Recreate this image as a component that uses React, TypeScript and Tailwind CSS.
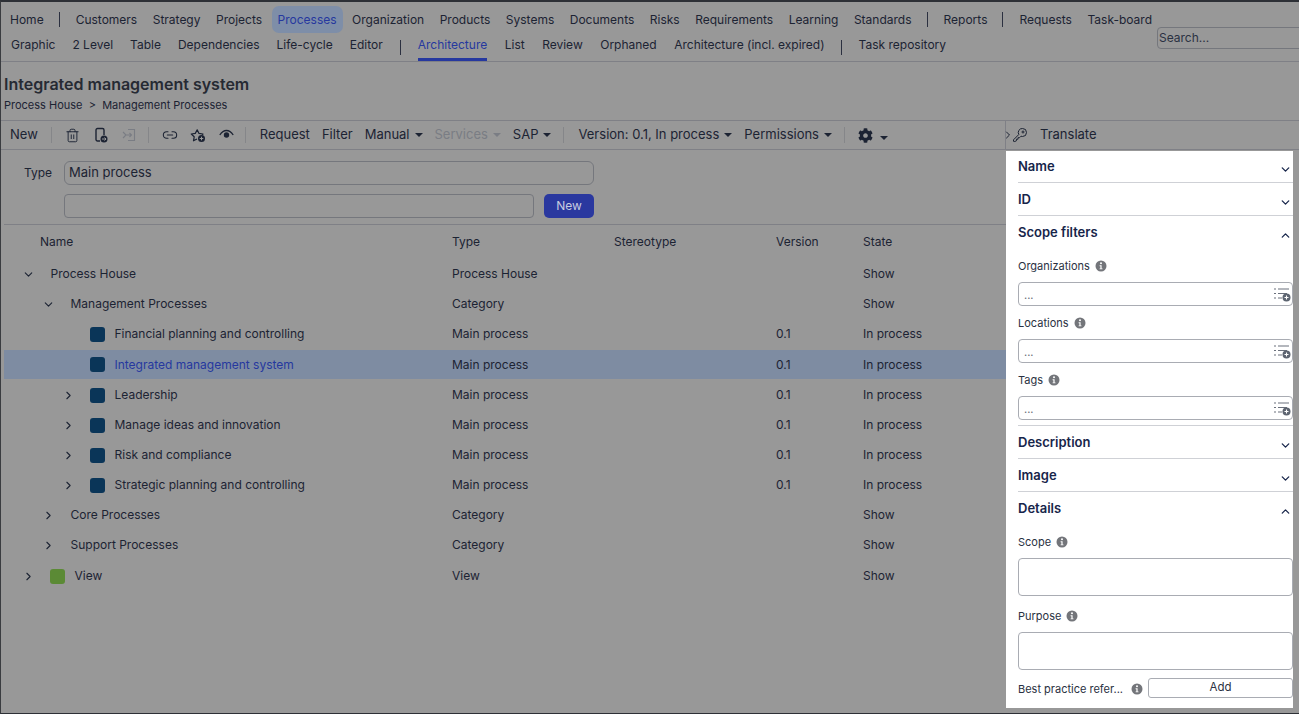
import { ChevronDown, ChevronRight, ChevronUp, Link2, Trash2 } from "lucide-react";
import { FaCog } from "react-icons/fa";

const topNav = [
  ["Home"],
  ["Customers", "Strategy", "Projects", "Processes", "Organization", "Products", "Systems", "Documents", "Risks", "Requirements", "Learning", "Standards"],
  ["Reports"],
  ["Requests", "Task-board"],
];
const subNav = [
  ["Graphic", "2 Level", "Table", "Dependencies", "Life-cycle", "Editor"],
  ["Architecture", "List", "Review", "Orphaned", "Architecture (incl. expired)"],
  ["Task repository"],
];

const indents = ["pl-[14px]", "pl-[34px]", "pl-[54px]"];

type Row = {
  name: string;
  type: string;
  version?: string;
  state: string;
  level: number;
  arrow?: "open" | "closed";
  icon?: "blue" | "green";
  selected?: boolean;
  spaced?: boolean;
};

const rows: Row[] = [
  { name: "Process House", type: "Process House", state: "Show", level: 0, arrow: "open" },
  { name: "Management Processes", type: "Category", state: "Show", level: 1, arrow: "open" },
  { name: "Financial planning and controlling", type: "Main process", version: "0.1", state: "In process", level: 2, icon: "blue" },
  { name: "Integrated management system", type: "Main process", version: "0.1", state: "In process", level: 2, icon: "blue", selected: true },
  { name: "Leadership", type: "Main process", version: "0.1", state: "In process", level: 2, arrow: "closed", icon: "blue" },
  { name: "Manage ideas and innovation", type: "Main process", version: "0.1", state: "In process", level: 2, arrow: "closed", icon: "blue" },
  { name: "Risk and compliance", type: "Main process", version: "0.1", state: "In process", level: 2, arrow: "closed", icon: "blue" },
  { name: "Strategic planning and controlling", type: "Main process", version: "0.1", state: "In process", level: 2, arrow: "closed", icon: "blue" },
  { name: "Core Processes", type: "Category", state: "Show", level: 1, arrow: "closed" },
  { name: "Support Processes", type: "Category", state: "Show", level: 1, arrow: "closed" },
  { name: "View", type: "View", state: "Show", level: 0, arrow: "closed", icon: "green", spaced: true },
];

function Sep({ className }: { className: string }) {
  return <span className={`h-[15px] w-px shrink-0 bg-[#2b3040] ${className}`} />;
}

function Caret({ muted }: { muted?: boolean }) {
  return (
    <span
      className={`ml-[5px] inline-block h-0 w-0 border-x-[4px] border-t-[4px] border-x-transparent ${
        muted ? "border-t-[#7a7d84]" : "border-t-[#1c2333]"
      }`}
    />
  );
}

function InfoDot() {
  return (
    <svg width="12" height="12" viewBox="0 0 12 12" className="shrink-0">
      <circle cx="6" cy="6" r="5.500" fill="#73757a" />
      <circle cx="6" cy="3.300" r="1" fill="#fff" />
      <path d="M4.600 5.300H6.600V8.400H7.500V9.300H4.600V8.400H5.400V6.200H4.600Z" fill="#fff" />
    </svg>
  );
}

function ListAddIcon() {
  return (
    <svg width="18" height="15" viewBox="0 0 18 15" className="absolute right-[1px] top-[4px]" fill="none">
      <path d="M1 2h2M5 2h11M1 6.500h2M5 6.500h9M1 11h2M5 11h4" stroke="#6a707c" strokeWidth="1.100" />
      <circle cx="13.500" cy="10.500" r="4" fill="#5d6470" />
      <path d="M11.500 10.500h4M13.500 8.500v4" stroke="#fff" strokeWidth="1.100" />
    </svg>
  );
}

function Section({ title, open, className = "h-[32px] pt-[8px]" }: { title: string; open?: boolean; className?: string }) {
  return (
    <div className={`flex items-start justify-between pr-[1.5px] ${className}`}>
      <span className="text-[13px] font-semibold leading-[17px] text-[#17254a]">{title}</span>
      {open ? (
        <ChevronUp size={13} strokeWidth={2.4} className="mt-[5px] text-[#17254a]" />
      ) : (
        <ChevronDown size={13} strokeWidth={2.4} className="mt-[5px] text-[#17254a]" />
      )}
    </div>
  );
}

function Label({ text, className = "" }: { text: string; className?: string }) {
  return (
    <div className={`flex items-center gap-[5px] text-[11px] leading-[14px] text-[#2a3142] ${className}`}>
      <span>{text}</span>
      <InfoDot />
    </div>
  );
}

function DotsInput({ className = "" }: { className?: string }) {
  return (
    <div className={`relative h-[24px] rounded-[4px] border border-[#a9acb3] pl-[5px] text-[11px] leading-[24px] text-[#666b75] ${className}`}>
      ...
      <ListAddIcon />
    </div>
  );
}

export default function App() {
  return (
    <div className="flex h-[714px] w-[1299px] flex-col overflow-hidden border-b border-l border-t-2 border-b-[#2d3036] border-l-[#3a3c40] border-t-[#2d3036] bg-[#989898] font-['Inter',sans-serif] text-[#1c2333]">
      {/* top navigation */}
      <nav className="flex h-[60px] shrink-0 border-b border-[#7f8086]">
        <div className="w-[1156px] shrink-0 pl-[3px]">
          <div className="mt-[4px] flex h-[27px] items-center whitespace-nowrap text-[12px]">
            {topNav.map((group, g) => (
              <div key={g} className="flex items-center">
                {g > 0 && <Sep className="ml-[5.5px] mr-[10px]" />}
                {group.map((item) => (
                  <span
                    key={item}
                    className={`mr-[3.5px] rounded-[7px] px-[6px] py-[5px] leading-[17px] ${
                      item === "Processes" ? "bg-[#7e8ea8] text-[#26389f]" : ""
                    }`}
                  >
                    {item}
                  </span>
                ))}
              </div>
            ))}
          </div>
          <div className="flex h-[28px] items-center whitespace-nowrap text-[12px]">
            {subNav.map((group, g) => (
              <div key={g} className="flex h-full items-center">
                {g > 0 && <Sep className="ml-[7.5px] mr-[9.5px]" />}
                {group.map((item, i) => (
                  <span
                    key={item}
                    className={`flex h-full items-center border-b-[3px] pb-[1px] ${
                      i === 0 ? "ml-[7px]" : g === 0 ? "ml-[17px]" : "ml-[17.5px]"
                    } ${item === "Architecture" && g === 1 ? "border-[#26389f] text-[#26389f]" : "border-transparent"}`}
                  >
                    {item}
                  </span>
                ))}
                <span className={g === 0 ? "w-[10px]" : "w-[9px]"} />
              </div>
            ))}
          </div>
        </div>
        <div className="mt-[25px] h-[22px] w-[200px] shrink-0 rounded-[4px] border border-[#75777d] pl-[1px] text-[12px] leading-[20px] text-[#2a3142]">
          Search...
        </div>
      </nav>

      {/* heading */}
      <div className="h-[59px] shrink-0 border-b border-[#7f8086] pl-[3px]">
        <h1 className="mt-[12px] text-[16px] font-semibold leading-[20px] text-[#262a33]">Integrated management system</h1>
        <p className="mt-[4px] text-[11px] leading-[14px]">Process House&nbsp; &gt;&nbsp; Management Processes</p>
      </div>

      {/* toolbar */}
      <div className="flex h-[29px] shrink-0 items-center border-b border-[#7f8086] text-[13px]">
        <div className="flex h-full w-[1004px] shrink-0 items-center pl-[9px]">
          <span>New</span>
          <span className="mx-[13px] h-[16px] w-px bg-[#858689]" />
          <Trash2 size={15} strokeWidth={1.5} />
          <svg width="16" height="16" viewBox="0 0 16 16" fill="none" className="ml-[13px]">
            <path d="M7 14H4.500A1.500 1.500 0 0 1 3 12.500V3a1.500 1.500 0 0 1 1.500-1.500h5A1.500 1.500 0 0 1 11 3v5" stroke="#1c2333" strokeWidth="1.400" />
            <circle cx="11" cy="12" r="3.500" fill="#1c2333" />
            <path d="M9 12h4M11.500 10.500 13 12l-1.500 1.500" stroke="#999" strokeWidth="1" />
          </svg>
          <svg width="16" height="16" viewBox="0 0 16 16" fill="none" stroke="#7a7d84" strokeWidth="1.100" className="ml-[12px]">
            <path d="M7 2.500h6.500v11H7M2 5l3 3-3 3M5 8h6M8.500 6l2 2-2 2" />
          </svg>
          <span className="ml-[11px] h-[16px] w-px bg-[#858689]" />
          <Link2 size={16} strokeWidth={1.6} className="ml-[13px]" />
          <svg width="16" height="16" viewBox="0 0 16 16" fill="none" className="ml-[12px]">
            <path d="M7 12 3.500 13.800l.7-4L1.300 7l4-.6L7.200 2.800l1.800 3.600 4 .6-1 1" stroke="#1c2333" strokeWidth="1.200" strokeLinejoin="round" />
            <circle cx="11.500" cy="11.500" r="3.500" fill="#1c2333" />
            <path d="M9.700 11.500h3.600M11.500 9.700v3.600" stroke="#999" strokeWidth="1" />
          </svg>
          <svg width="15" height="12" viewBox="0 0 15 12" className="ml-[13px]">
            <path d="M.8 6C3 2.600 5 1.500 7.500 1.500S12 2.600 14.200 6" fill="none" stroke="#1c2333" strokeWidth="1.300" />
            <circle cx="7.500" cy="6" r="2.700" fill="#1c2333" />
          </svg>
          <span className="mx-[11px] h-[16px] w-px bg-[#858689]" />
          <span className="ml-[3px]">Request</span>
          <span className="ml-[12px]">Filter</span>
          <span className="ml-[12px] flex items-center">Manual<Caret /></span>
          <span className="ml-[12px] flex items-center text-[#7a7d84]">Services<Caret muted /></span>
          <span className="ml-[12px] flex items-center">SAP<Caret /></span>
          <span className="ml-[12px] mr-[14px] h-[16px] w-px bg-[#858689]" />
          <span className="flex items-center">Version: 0.1, In process<Caret /></span>
          <span className="ml-[12px] flex items-center">Permissions<Caret /></span>
          <span className="ml-[12px] mr-[13px] h-[16px] w-px bg-[#858689]" />
          <FaCog size={15} />
          <span className="ml-[2px] mt-[5px] flex"><Caret /></span>
        </div>
        <div className="flex h-full flex-1 items-center border-l border-[#7f8086]">
          <ChevronRight size={12} strokeWidth={2} className="-ml-[4px]" />
          <svg width="16" height="16" viewBox="0 0 16 16" fill="none" stroke="#1c2333" strokeWidth="1" className="-ml-[2px]">
            <path d="M10.500 1.500a4 4 0 0 1 0 8c-.5 0-1-.1-1.500-.3L7.500 10.700H6v1.500H4.500v1.500L2.800 14.500 1.500 14.300V12.800L6.800 7.500A4 4 0 0 1 10.500 1.500Z" strokeLinejoin="round" />
            <circle cx="11" cy="5" r="1" />
          </svg>
          <span className="ml-[12px]">Translate</span>
        </div>
      </div>

      <div className="flex min-h-0 flex-1">
        {/* left: form and tree */}
        <main className="w-[1005px] shrink-0 pl-[3px]">
          <div className="border-b border-[#7f8086] pb-[6px] pt-[11px] text-[13px]">
            <div className="flex items-center">
              <span className="ml-[20px] w-[40px] text-[12px]">Type</span>
              <div className="h-[24px] w-[530px] rounded-[6px] border border-[#75777d] pl-[4px] leading-[21px]">Main process</div>
            </div>
            <div className="ml-[60px] mt-[9px] flex items-center">
              <div className="h-[24px] w-[470px] rounded-[4px] border border-[#75777d]" />
              <button className="ml-[10px] h-[24px] w-[50px] rounded-[5px] bg-[#2a389f] text-[12px] text-[#c8cce0]">New</button>
            </div>
          </div>

          <div className="grid h-[33px] grid-cols-[448px_162px_162px_87px_1fr] items-center text-[12px]">
            <span className="pl-[36px]">Name</span>
            <span>Type</span>
            <span>Stereotype</span>
            <span>Version</span>
            <span>State</span>
          </div>

          <div className="pt-[1px]">
            {rows.map((row) => (
              <div
                key={row.name}
                className={`grid grid-cols-[448px_162px_162px_87px_1fr] items-center text-[12px] ${
                  row.selected ? "my-[1px] h-[29px] bg-[#7e8ca2]" : "h-[30px]"
                } ${row.spaced ? "mt-[1px]" : ""}`}
              >
                <div className={`flex items-center ${indents[row.level]}`}>
                  <span className="mr-[12px] flex w-[20px] justify-center">
                    {row.arrow === "open" && <ChevronDown size={13} strokeWidth={2} />}
                    {row.arrow === "closed" && <ChevronRight size={13} strokeWidth={2} />}
                  </span>
                  {row.icon && (
                    <span className={`mr-[9px] h-[15px] w-[15px] rounded-[3px] ${row.icon === "blue" ? "bg-[#0a3558]" : "bg-[#5b8a35]"}`} />
                  )}
                  <span className={`ml-[0.5px] ${row.selected ? "text-[#26389f]" : ""}`}>{row.name}</span>
                </div>
                <span>{row.type}</span>
                <span />
                <span>{row.version}</span>
                <span>{row.state}</span>
              </div>
            ))}
          </div>
        </main>

        {/* right: properties panel */}
        <aside className="mb-[5px] mt-[1px] w-[287px] shrink-0 bg-white pl-[12px]">
          <Section title="Name" className="h-[31px] pt-[7px]" />
          <div className="border-t border-[#cfd1d6]"><Section title="ID" /></div>
          <div className="border-t border-[#cfd1d6]"><Section title="Scope filters" open /></div>
          <Label text="Organizations" className="mt-[11px]" />
          <DotsInput className="mt-[9px]" />
          <Label text="Locations" className="mt-[10px]" />
          <DotsInput className="mt-[9px]" />
          <Label text="Tags" className="mt-[10px]" />
          <DotsInput className="mt-[9px]" />
          <div className="mt-[5px] border-t border-[#cfd1d6]"><Section title="Description" /></div>
          <div className="border-t border-[#cfd1d6]"><Section title="Image" /></div>
          <div className="border-t border-[#cfd1d6]"><Section title="Details" open /></div>
          <Label text="Scope" className="mt-[11px]" />
          <div className="mt-[9px] h-[38px] rounded-[4px] border border-[#a9acb3]" />
          <Label text="Purpose" className="mt-[13px]" />
          <div className="mt-[9px] h-[38px] rounded-[4px] border border-[#a9acb3]" />
          <div className="mt-[8px] flex items-center">
            <Label text="Best practice refer..." className="mt-[2px] w-[130px] gap-[8px]" />
            <button className="h-[20px] flex-1 rounded-[3px] border border-[#a9acb3] text-[11.5px] text-[#2a3142]">Add</button>
          </div>
        </aside>
      </div>
    </div>
  );
}
